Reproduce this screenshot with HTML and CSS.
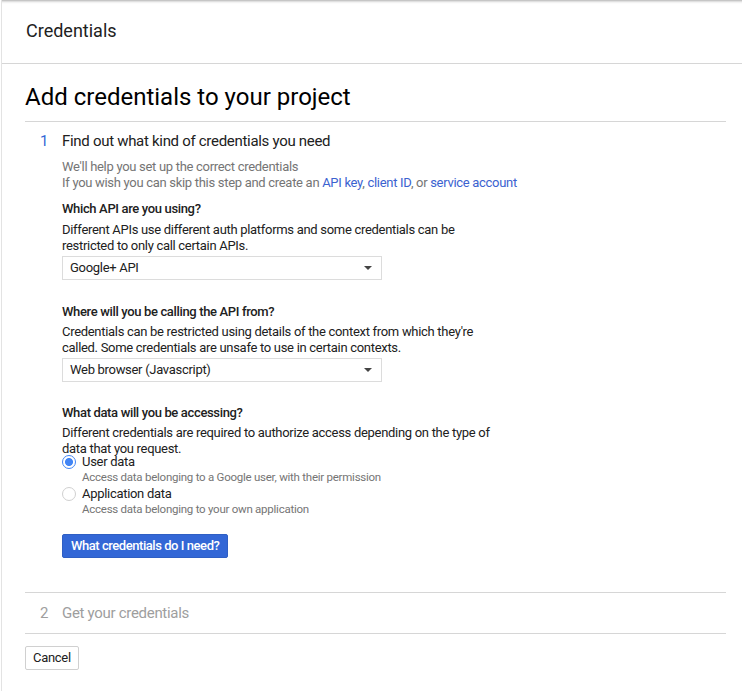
FILE: index.html
```html
<!DOCTYPE html>
<html>
<head>
<meta charset="utf-8">
<link rel="stylesheet" href="styles.css">
</head>
<body>
<div class="page">
  <header class="topbar"><span class="topbar-title">Credentials</span></header>
  <main class="main">
    <h1 class="heading">Add credentials to your project</h1>
    <section class="step step-active">
      <div class="step-head">
        <span class="step-num">1</span>
        <span class="step-title">Find out what kind of credentials you need</span>
      </div>
      <div class="step-body">
        <p class="intro">We'll help you set up the correct credentials<br>If you wish you can skip this step and create an <a class="link" href="#">API key</a>, <a class="link" href="#">client ID</a>, or <a class="link" href="#">service account</a></p>

        <div class="field field-first">
          <div class="label">Which API are you using?</div>
          <p class="desc">Different APIs use different auth platforms and some credentials can be restricted to only call certain APIs.</p>
          <div class="select"><span>Google+ API</span><span class="caret"></span></div>
        </div>

        <div class="field">
          <div class="label">Where will you be calling the API from?</div>
          <p class="desc">Credentials can be restricted using details of the context from which they're called. Some credentials are unsafe to use in certain contexts.</p>
          <div class="select"><span>Web browser (Javascript)</span><span class="caret"></span></div>
        </div>

        <div class="field field-last">
          <div class="label">What data will you be accessing?</div>
          <p class="desc desc-tight">Different credentials are required to authorize access depending on the type of data that you request.</p>
          <div class="radios">
            <div class="radio-opt">
              <div class="radio-row"><span class="radio radio-on"></span><span class="radio-label">User data</span></div>
              <div class="radio-sub">Access data belonging to a Google user, with their permission</div>
            </div>
            <div class="radio-opt">
              <div class="radio-row"><span class="radio"></span><span class="radio-label">Application data</span></div>
              <div class="radio-sub">Access data belonging to your own application</div>
            </div>
          </div>
        </div>

        <button class="btn-primary">What credentials do I need?</button>
      </div>
    </section>
    <section class="step step-inactive">
      <div class="step-head">
        <span class="step-num">2</span>
        <span class="step-title">Get your credentials</span>
      </div>
    </section>
    <div class="actions"><button class="btn">Cancel</button></div>
  </main>
</div>
</body>
</html>
```

FILE: styles.css
```css
html, body {
  margin: 0;
  padding: 0;
  background: #fff;
}
body {
  font-family: Roboto, "Liberation Sans", Arial, sans-serif;
  color: #212121;
  font-size: 13px;
  line-height: 16px;
  letter-spacing: -0.3px;
}
.page {
  margin-left: 1px;
  border-left: 1px solid #e3e3e3;
  min-height: 691px;
  box-sizing: border-box;
}
.topbar {
  height: 64px;
  box-sizing: border-box;
  border-bottom: 1px solid #d6d6d6;
  padding: 19px 0 0 24px;
  box-shadow: inset 0 4px 3px -3px rgba(0,0,0,0.35);
}
.topbar-title {
  font-size: 18px;
  line-height: 24px;
  letter-spacing: 0;
  color: #212121;
  display: block;
}
.main {
  padding: 0 16px 0 23px;
}
.heading {
  margin: 17px 0 0;
  padding-bottom: 8px;
  font-size: 24px;
  line-height: 32px;
  font-weight: 400;
  letter-spacing: 0;
  color: #000;
  border-bottom: 1px solid #d6d6d6;
}
.step {
  border-bottom: 1px solid #d6d6d6;
}
.step-active {
  padding: 9px 0 34px;
}
.step-inactive {
  padding: 10px 0 10px;
}
.step-head {
  display: flex;
  font-size: 15px;
  line-height: 20px;
}
.step-num {
  width: 22px;
  padding-left: 15px;
  color: #3367d6;
}
.step-inactive .step-num,
.step-inactive .step-title {
  color: #9e9e9e;
}
.step-title {
  color: #212121;
}
.step-body {
  padding-left: 37px;
}
.intro {
  margin: 8px 0 0;
  color: #757575;
}
.link {
  color: #3b62d0;
  text-decoration: none;
}
.field {
  margin-top: 24px;
}
.field-first {
  margin-top: 10px;
}
.field-last {
  margin-top: 23px;
}
.label {
  font-weight: 500;
  color: #212121;
  letter-spacing: -0.35px;
}
.desc {
  margin: 5px 0 0;
  max-width: 440px;
  color: #212121;
}
.field + .field .desc {
  margin-top: 4px;
}
.field-last .desc-tight {
  margin-top: 6px;
}
.select {
  margin-top: 2px;
  width: 320px;
  height: 24px;
  box-sizing: border-box;
  border: 1px solid #dcdcdc;
  padding: 0 9px 0 7px;
  display: flex;
  align-items: center;
  justify-content: space-between;
  color: #212121;
}
.caret {
  width: 0;
  height: 0;
  border-left: 4px solid transparent;
  border-right: 4px solid transparent;
  border-top: 4px solid #444;
}
.radios {
  margin-top: -3px;
}
.radio-opt + .radio-opt {
  margin-top: 1px;
}
.radio-row {
  display: flex;
  align-items: center;
  height: 16px;
}
.radio {
  width: 12px;
  height: 12px;
  border-radius: 50%;
  border: 1px solid #d0d0d0;
  box-sizing: content-box;
  margin-right: 6px;
  flex: none;
}
.radio-on {
  border-color: #4285f4;
  background: radial-gradient(circle, #4285f4 0 3.6px, #fff 4.4px);
}
.radio-label {
  color: #212121;
}
.radio-sub {
  padding-left: 20px;
  font-size: 11.5px;
  line-height: 15px;
  letter-spacing: -0.25px;
  color: #757575;
}
.btn-primary {
  margin-top: 17px;
  display: block;
  height: 24px;
  padding: 0 8px;
  border: 1px solid #2f5fc4;
  border-radius: 2px;
  background: #3367d6;
  color: #fff;
  font-family: inherit;
  font-size: 13px;
  font-weight: 500;
  letter-spacing: -0.45px;
  line-height: 22px;
}
.actions {
  padding-top: 12px;
}
.btn {
  height: 24px;
  padding: 0 7px;
  border: 1px solid #d0d0d0;
  border-radius: 2px;
  background: #fff;
  color: #212121;
  font-family: inherit;
  font-size: 13px;
  letter-spacing: -0.3px;
  line-height: 22px;
}
```
